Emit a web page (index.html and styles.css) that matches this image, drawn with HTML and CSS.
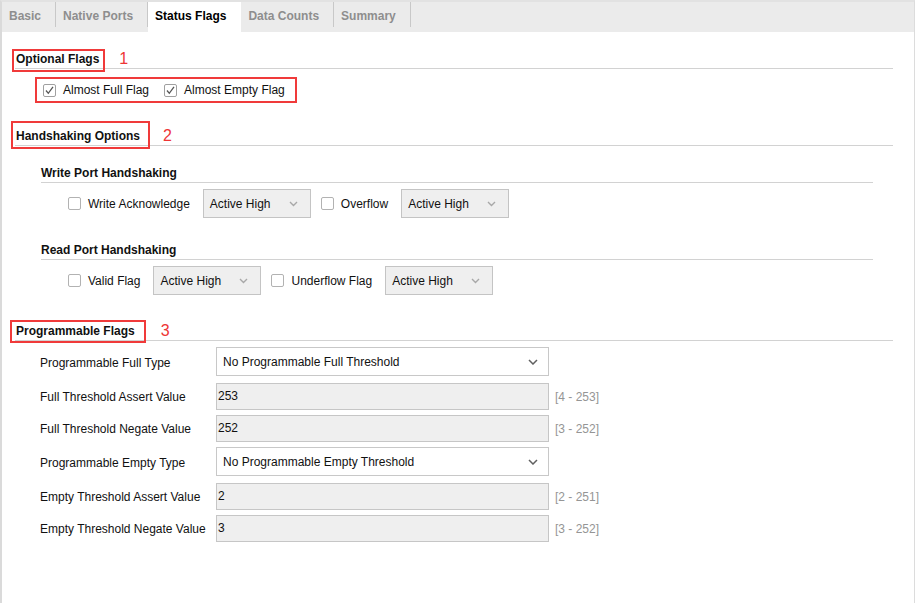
FILE: index.html
```html
<!DOCTYPE html>
<html>
<head>
<meta charset="utf-8">
<title>Status Flags</title>
<link rel="stylesheet" href="styles.css">
</head>
<body>
<div class="window">
  <div class="tabs">
    <div class="tab">Basic</div>
    <div class="tab">Native Ports</div>
    <div class="tab active">Status Flags</div>
    <div class="tab">Data Counts</div>
    <div class="tab">Summary</div>
  </div>
  <div class="content">
    <section class="group g1">
      <div class="group-head"><span class="title mark m1">Optional Flags</span><span class="num n1">1</span></div>
      <div class="flag-box">
        <label class="check"><span class="box checked"><svg width="11" height="11" viewBox="0 0 11 11"><polyline points="2,5.5 4.3,8.3 9,1.8" fill="none" stroke="#555" stroke-width="1.3"/></svg></span>Almost Full Flag</label>
        <label class="check"><span class="box checked"><svg width="11" height="11" viewBox="0 0 11 11"><polyline points="2,5.5 4.3,8.3 9,1.8" fill="none" stroke="#555" stroke-width="1.3"/></svg></span>Almost Empty Flag</label>
      </div>
    </section>

    <section class="group g2">
      <div class="group-head"><span class="title mark m2">Handshaking Options</span><span class="num n2">2</span></div>
      <div class="sub">
        <div class="sub-head">Write Port Handshaking</div>
        <div class="hs-row">
          <label class="check"><span class="box"></span>Write Acknowledge</label>
          <div class="drop"><span>Active High</span><svg width="9" height="6" viewBox="0 0 9 6"><polyline points="1,1 4.5,4.5 8,1" fill="none" stroke="#a8a8a8" stroke-width="1.4"/></svg></div>
          <label class="check"><span class="box"></span>Overflow</label>
          <div class="drop"><span>Active High</span><svg width="9" height="6" viewBox="0 0 9 6"><polyline points="1,1 4.5,4.5 8,1" fill="none" stroke="#a8a8a8" stroke-width="1.4"/></svg></div>
        </div>
      </div>
      <div class="sub">
        <div class="sub-head">Read Port Handshaking</div>
        <div class="hs-row">
          <label class="check"><span class="box"></span>Valid Flag</label>
          <div class="drop"><span>Active High</span><svg width="9" height="6" viewBox="0 0 9 6"><polyline points="1,1 4.5,4.5 8,1" fill="none" stroke="#a8a8a8" stroke-width="1.4"/></svg></div>
          <label class="check"><span class="box"></span>Underflow Flag</label>
          <div class="drop"><span>Active High</span><svg width="9" height="6" viewBox="0 0 9 6"><polyline points="1,1 4.5,4.5 8,1" fill="none" stroke="#a8a8a8" stroke-width="1.4"/></svg></div>
        </div>
      </div>
    </section>

    <section class="group g3">
      <div class="group-head"><span class="title mark m3">Programmable Flags</span><span class="num n3">3</span></div>
      <div class="prog">
        <div class="prow">
          <span class="plabel">Programmable Full Type</span>
          <div class="select"><span>No Programmable Full Threshold</span><svg width="10" height="6" viewBox="0 0 10 6"><polyline points="1,1 5,5 9,1" fill="none" stroke="#606060" stroke-width="1.5"/></svg></div>
        </div>
        <div class="prow">
          <span class="plabel">Full Threshold Assert Value</span>
          <div class="field">253</div>
          <span class="range">[4 - 253]</span>
        </div>
        <div class="prow">
          <span class="plabel">Full Threshold Negate Value</span>
          <div class="field">252</div>
          <span class="range">[3 - 252]</span>
        </div>
        <div class="prow">
          <span class="plabel">Programmable Empty Type</span>
          <div class="select"><span>No Programmable Empty Threshold</span><svg width="10" height="6" viewBox="0 0 10 6"><polyline points="1,1 5,5 9,1" fill="none" stroke="#606060" stroke-width="1.5"/></svg></div>
        </div>
        <div class="prow">
          <span class="plabel">Empty Threshold Assert Value</span>
          <div class="field">2</div>
          <span class="range">[2 - 251]</span>
        </div>
        <div class="prow">
          <span class="plabel">Empty Threshold Negate Value</span>
          <div class="field">3</div>
          <span class="range">[3 - 252]</span>
        </div>
      </div>
    </section>
  </div>
</div>
</body>
</html>
```
FILE: styles.css
```css
* { box-sizing: border-box; }
html, body { margin: 0; background: #fff; }
body {
  font-family: "Liberation Sans", Arial, sans-serif;
  font-size: 12px;
  color: #111;
}
.window {
  width: 915px;
  height: 603px;
  border-left: 2px solid #dadada;
  border-right: 1px solid #dcdcdc;
  border-top: 2px solid #e2e2e2;
  overflow: hidden;
}
.tabs {
  display: flex;
  height: 30px;
  background: #ebebeb;
}
.tab {
  height: 30px;
  line-height: 29px;
  padding: 0 15px 0 7px;
  font-weight: bold;
  color: #8e8e8e;
  background: linear-gradient(#c8c8c8, #c8c8c8) right top / 1px 25px no-repeat;
}
.tab.active {
  background: #fff;
  color: #000;
}
.content {
  padding: 18px 21px 0 13px;
}
.group-head {
  display: flex;
  align-items: center;
  height: 19px;
  border-bottom: 1px solid #d2d2d2;
  padding-left: 1px;
}
.title {
  font-weight: bold;
  line-height: 18px;
  position: relative;
}
.mark::after {
  content: "";
  position: absolute;
  border: 2px solid #f03a3a;
}
.m1::after { left: -4px; right: -6px; top: -1px; bottom: -4px; }
.m2::after { left: -5px; right: -10px; top: -6px; bottom: -4px; }
.m3::after { left: -6px; right: -11px; top: -2px; bottom: -3px; }
.num {
  color: #ee3535;
  font-size: 16px;
  line-height: 18px;
  margin-left: 20px;
}
.n2 { margin-left: 23px; }
.n3 { margin-left: 26px; }

.flag-box {
  display: flex;
  width: fit-content;
  align-items: center;
  gap: 15px;
  height: 26px;
  margin: 8px 0 0 20px;
  padding: 0 10px 0 6px;
  border: 2px solid #f03a3a;
}
.check {
  display: flex;
  align-items: center;
  gap: 7px;
}
.box {
  width: 13px;
  height: 13px;
  border: 1px solid #b2b2b2;
  border-radius: 2px;
  background: #fff;
  display: flex;
  align-items: center;
  justify-content: center;
}
.box.checked { border-color: #a0a0a0; }

.g2 { margin-top: 24px; }
.sub { margin: 18px 20px 0 26px; }
.sub + .sub { margin-top: 23px; }
.sub-head {
  height: 19px;
  line-height: 18px;
  border-bottom: 1px solid #d2d2d2;
  font-weight: bold;
}
.hs-row {
  display: flex;
  align-items: center;
  height: 29px;
  margin-top: 6px;
  padding-left: 27px;
}
.drop {
  width: 108px;
  height: 29px;
  margin: 0 10px 0 13px;
  padding: 0 12px 0 6px;
  border: 1px solid #c4c4c4;
  background: #efefef;
  display: flex;
  align-items: center;
  justify-content: space-between;
}

.g3 { margin-top: 27px; }
.prog {
  display: flex;
  flex-direction: column;
  gap: 5px;
  margin: 6px 0 0 25px;
}
.prow {
  display: flex;
  align-items: center;
}
.plabel { width: 176px; }
.select {
  width: 333px;
  height: 29px;
  margin-bottom: 2px;
  padding: 0 10px 0 6px;
  border: 1px solid #c8c8c8;
  background: #fff;
  display: flex;
  align-items: center;
  justify-content: space-between;
}
.field {
  width: 333px;
  height: 27px;
  line-height: 25px;
  padding-left: 1px;
  border: 1px solid #c6c6c6;
  background: #efefef;
}
.range {
  margin-left: 6px;
  color: #959595;
}
```
